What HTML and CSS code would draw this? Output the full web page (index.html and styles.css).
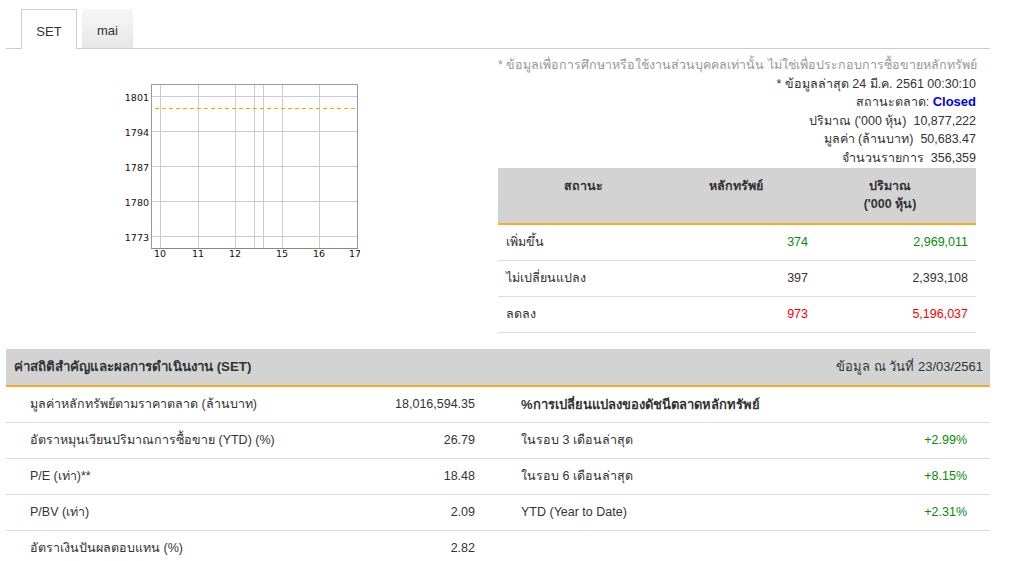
FILE: index.html
```html
<!DOCTYPE html>
<html lang="th">
<head>
<meta charset="utf-8">
<title>SET</title>
<link rel="stylesheet" href="styles.css">
</head>
<body>
<div class="page">
  <div class="tabs">
    <div class="tab active">SET</div>
    <div class="tab">mai</div>
  </div>

  <div class="top">
    <div class="chart-col">
      <svg class="chart" width="250" height="180" viewBox="0 0 250 180" xmlns="http://www.w3.org/2000/svg">
        <g stroke="#cccccc" stroke-width="1">
          <line x1="41" y1="14.5" x2="247" y2="14.5"/>
          <line x1="41" y1="49.5" x2="247" y2="49.5"/>
          <line x1="41" y1="84.5" x2="247" y2="84.5"/>
          <line x1="41" y1="119.5" x2="247" y2="119.5"/>
          <line x1="41" y1="154.5" x2="247" y2="154.5"/>
          <line x1="50.5" y1="2" x2="50.5" y2="166"/>
          <line x1="88.5" y1="2" x2="88.5" y2="166"/>
          <line x1="125.5" y1="2" x2="125.5" y2="166"/>
          <line x1="144.5" y1="2" x2="144.5" y2="166"/>
          <line x1="153.5" y1="2" x2="153.5" y2="166"/>
          <line x1="172.5" y1="2" x2="172.5" y2="166"/>
          <line x1="209.5" y1="2" x2="209.5" y2="166"/>
        </g>
        <path d="M41.5 166 V2.5 H247.5 V166" fill="none" stroke="#999999" stroke-width="1"/>
        <line x1="41" y1="166.5" x2="248" y2="166.5" stroke="#888888" stroke-width="1"/>
        <line x1="45" y1="26.5" x2="247" y2="26.5" stroke="#f5a400" stroke-width="1" stroke-dasharray="4 3"/>
        <g class="ylab" text-anchor="end">
          <text x="39" y="18.5">1801</text>
          <text x="39" y="53.5">1794</text>
          <text x="39" y="88.5">1787</text>
          <text x="39" y="123.5">1780</text>
          <text x="39" y="158.5">1773</text>
        </g>
        <g class="xlab" text-anchor="middle">
          <text x="50" y="175">10</text>
          <text x="88" y="175">11</text>
          <text x="125" y="175">12</text>
          <text x="172" y="175">15</text>
          <text x="209" y="175">16</text>
          <text x="245" y="175">17</text>
        </g>
      </svg>
    </div>

    <div class="info-col">
      <div class="info">
        <div class="note">* ข้อมูลเพื่อการศึกษาหรือใช้งานส่วนบุคคลเท่านั้น ไม่ใช่เพื่อประกอบการซื้อขายหลักทรัพย์</div>
        <div>* ข้อมูลล่าสุด 24 มี.ค. 2561 00:30:10</div>
        <div>สถานะตลาด: <span class="closed">Closed</span></div>
        <div>ปริมาณ ('000 หุ้น)&nbsp; 10,877,222</div>
        <div>มูลค่า (ล้านบาท)&nbsp; 50,683.47</div>
        <div>จำนวนรายการ&nbsp; 356,359</div>
      </div>
      <table class="status">
        <thead>
          <tr>
            <th class="c1">สถานะ</th>
            <th class="c2">หลักทรัพย์</th>
            <th class="c3">ปริมาณ<br>('000 หุ้น)</th>
          </tr>
        </thead>
        <tbody>
          <tr>
            <td class="c1">เพิ่มขึ้น</td>
            <td class="num up">374</td>
            <td class="num up">2,969,011</td>
          </tr>
          <tr>
            <td class="c1">ไม่เปลี่ยนแปลง</td>
            <td class="num">397</td>
            <td class="num">2,393,108</td>
          </tr>
          <tr>
            <td class="c1">ลดลง</td>
            <td class="num down">973</td>
            <td class="num down">5,196,037</td>
          </tr>
        </tbody>
      </table>
    </div>
  </div>

  <div class="stats">
    <div class="stats-head">
      <span class="stats-title">ค่าสถิติสำคัญและผลการดำเนินงาน (SET)</span>
      <span class="stats-date">ข้อมูล ณ วันที่ 23/03/2561</span>
    </div>
    <div class="stats-body">
      <div class="stats-col">
        <div class="row"><span>มูลค่าหลักทรัพย์ตามราคาตลาด (ล้านบาท)</span><span>18,016,594.35</span></div>
        <div class="row"><span>อัตราหมุนเวียนปริมาณการซื้อขาย (YTD) (%)</span><span>26.79</span></div>
        <div class="row"><span>P/E (เท่า)**</span><span>18.48</span></div>
        <div class="row"><span>P/BV (เท่า)</span><span>2.09</span></div>
        <div class="row"><span>อัตราเงินปันผลตอบแทน (%)</span><span>2.82</span></div>
      </div>
      <div class="stats-col">
        <div class="row"><span class="bold">%การเปลี่ยนแปลงของดัชนีตลาดหลักทรัพย์</span></div>
        <div class="row"><span>ในรอบ 3 เดือนล่าสุด</span><span class="up">+2.99%</span></div>
        <div class="row"><span>ในรอบ 6 เดือนล่าสุด</span><span class="up">+8.15%</span></div>
        <div class="row"><span>YTD (Year to Date)</span><span class="up">+2.31%</span></div>
      </div>
    </div>
  </div>
</div>
</body>
</html>
```

FILE: styles.css
```css
* { box-sizing: border-box; }

html, body {
  margin: 0;
  padding: 0;
  background: #ffffff;
}

body {
  font-family: "Liberation Sans", Arial, sans-serif;
  font-size: 12.5px;
  color: #333333;
}

.page {
  width: 984px;
  margin-left: 6px;
  padding-top: 9px;
}

/* Tabs */
.tabs {
  display: flex;
  gap: 5px;
  padding-left: 15px;
  border-bottom: 1px solid #cccccc;
  height: 40px;
}

.tab {
  height: 39px;
  padding: 14px 15px 0;
  line-height: 16px;
  font-size: 13px;
  color: #333333;
  width: 51px;
  text-align: center;
  background: linear-gradient(#f7f7f7, #e6e6e6);
}

.tab.active {
  background: #ffffff;
  border: 1px solid #cccccc;
  border-bottom: none;
  height: 40px;
  width: 56px;
  padding: 14px 0 0;
}

/* Top section */
.top {
  display: flex;
  padding-right: 14px;
}

.chart-col {
  flex: 1;
  padding-left: 104px;
  padding-top: 33px;
}

.chart {
  display: block;
}

.ylab text, .xlab text {
  font-family: "DejaVu Sans", sans-serif;
  font-size: 9.5px;
  fill: #111111;
}

.info-col {
  width: 478px;
}

.info {
  text-align: right;
  line-height: 18.6px;
  padding-top: 7px;
  white-space: nowrap;
  height: 119px;
}

.note {
  color: #999999;
}

.closed {
  color: #0000ee;
  font-weight: bold;
  font-size: 13px;
}

.status {
  width: 478px;
  border-collapse: collapse;
  table-layout: fixed;
}

.status th {
  background: #d3d3d3;
  border-bottom: 2px solid #f9a925;
  font-weight: bold;
  font-size: 12.5px;
  color: #333333;
  height: 56px;
  line-height: 18px;
  vertical-align: top;
  padding: 9px 14px 0 2px;
  text-align: center;
}

.status th.c1 { width: 170px; padding: 9px 0 0 0; }
.status th.c2 { width: 148px; }
.status th.c3 { width: 160px; }

.status td {
  height: 36px;
  border-bottom: 1px solid #dddddd;
  padding: 0 8px;
  vertical-align: middle;
}

.status td.num {
  text-align: right;
}

.up { color: #0a8a0a; }
.down { color: #ff0000; }

/* Stats */
.stats {
  margin-top: 16px;
}

.stats-head {
  display: flex;
  justify-content: space-between;
  align-items: center;
  height: 38px;
  background: #d3d3d3;
  border-bottom: 2px solid #f9a925;
  padding: 0 7px 0 8px;
}

.stats-title {
  font-weight: bold;
  font-size: 13.3px;
}

.stats-date {
  font-size: 13px;
}

.stats-body {
  display: flex;
}

.stats-col {
  width: 492px;
}

.row {
  display: flex;
  justify-content: space-between;
  align-items: center;
  height: 36px;
  border-bottom: 1px solid #dddddd;
  padding: 0 23px 0 24px;
}

.stats-col + .stats-col .row {
  padding: 0 23px 0 23px;
}

.bold {
  font-weight: bold;
  font-size: 13px;
}
```
